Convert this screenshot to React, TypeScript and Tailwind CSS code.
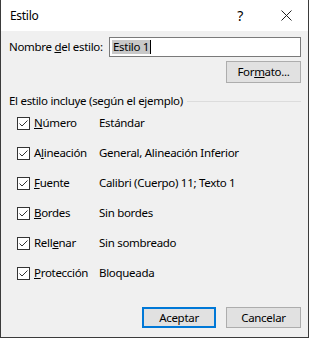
import { ReactNode } from "react";

const rows: Array<{ label: ReactNode; value: string }> = [
  { label: <><u>N</u>úmero</>, value: "Estándar" },
  { label: <>A<u>l</u>ineación</>, value: "General, Alineación Inferior" },
  { label: <><u>F</u>uente</>, value: "Calibri (Cuerpo) 11; Texto 1" },
  { label: <><u>B</u>ordes</>, value: "Sin bordes" },
  { label: <>Rell<u>e</u>nar</>, value: "Sin sombreado" },
  { label: <><u>P</u>rotección</>, value: "Bloqueada" },
];

export default function App() {
  return (
    <div
      className="flex h-[338px] w-[309px] flex-col border-x border-b border-[#3b3b3b] bg-[#f0f0f0] text-[11.5px] leading-[14px] tracking-[-0.3px] whitespace-nowrap text-black"
      style={{ fontFamily: '"Noto Sans", "Open Sans", sans-serif' }}
    >
      <div className="flex h-[31px] shrink-0 items-center bg-white pl-[9px]">
        <span className="text-[12px]">Estilo</span>
        <span className="ml-auto mr-[38px] text-[14px]">?</span>
        <svg width="11" height="11" viewBox="0 0 11 11" className="mr-[16px]">
          <path d="M0.5 0.5 L10.5 10.5 M10.5 0.5 L0.5 10.5" stroke="#222" strokeWidth="1" fill="none" />
        </svg>
      </div>

      <div className="flex flex-1 flex-col px-[7px]">
        <div className="mt-[6px] flex items-center">
          <span className="shrink-0 pl-px">
            Nombre <u>d</u>el estilo:
          </span>
          <div className="ml-auto flex h-[20px] w-[192px] shrink-0 items-center border border-[#7a7a7a] bg-white pl-[2px]">
            <span className="bg-[#c8c8c8] px-[1px]">Estilo 1</span>
            <span className="h-[14px] w-px bg-black" />
          </div>
        </div>

        <div className="mt-[4px] flex justify-end">
          <button className="h-[22px] w-[75px] border border-[#adadad] bg-[#e1e1e1]">
            For<u>m</u>ato...
          </button>
        </div>

        <div className="mt-[11px] flex items-center">
          <span className="pl-px">El estilo incluye (según el ejemplo)</span>
          <div className="ml-[4px] h-px flex-1 bg-[#dcdcdc]" />
        </div>

        <div className="flex flex-col pl-[9px]">
          {rows.map((row) => (
            <div key={row.value} className="flex h-[30px] items-center">
              <span className="flex h-[13px] w-[13px] shrink-0 items-center justify-center border border-[#333] bg-white">
                <svg width="11" height="11" viewBox="0 0 11 11">
                  <path d="M1.5 5.5 L4 8 L9.5 2.5" stroke="#333" strokeWidth="1" fill="none" />
                </svg>
              </span>
              <span className="ml-[4px] w-[65px] shrink-0">{row.label}</span>
              <span>{row.value}</span>
            </div>
          ))}
        </div>

        <div className="mt-auto mb-[9px] flex justify-end gap-[10px]">
          <button className="h-[21px] w-[74px] border-2 border-[#0078d7] bg-[#e1e1e1]">Aceptar</button>
          <button className="h-[21px] w-[75px] border border-[#adadad] bg-[#e1e1e1]">Cancelar</button>
        </div>
      </div>
    </div>
  );
}
